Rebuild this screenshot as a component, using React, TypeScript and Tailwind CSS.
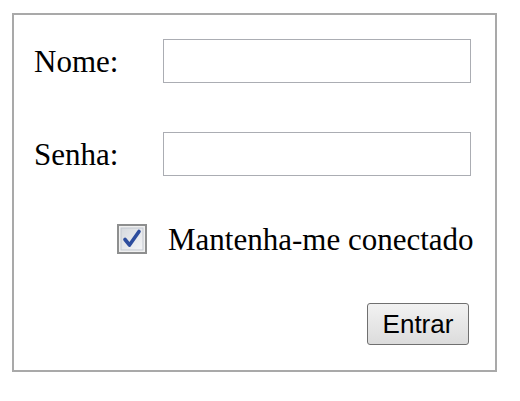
import React from 'react';

function CheckIcon() {
  return (
    <svg width="30" height="30" viewBox="0 0 30 30" className="block">
      <defs>
        <linearGradient id="cbg" x1="0" y1="0" x2="1" y2="1">
          <stop offset="0" stopColor="#d6d9de" />
          <stop offset="1" stopColor="#f4f5f7" />
        </linearGradient>
      </defs>
      <rect x="1" y="1" width="28" height="28" fill="#f0f0f0" stroke="#8e8f8f" strokeWidth="2" />
      <rect x="4" y="4" width="22" height="22" fill="url(#cbg)" stroke="#c2c7cf" strokeWidth="1" />
      <path d="M8 15.5 L12.5 21 L22 7.5" fill="none" stroke="#2d4d9e" strokeWidth="3.6" strokeLinecap="round" strokeLinejoin="round" />
    </svg>
  );
}

export default function App() {
  return (
    <div className="w-[520px] h-[401px] bg-white pt-[13px] pl-[12px]">
      <div className="w-[485px] h-[359px] border-2 border-[#a9a9a9] flex flex-col pt-[24px] text-black text-[31px] leading-none" style={{ fontFamily: '"Liberation Serif", "Times New Roman", serif' }}>
        <div className="flex items-center h-[44px]">
          <span className="w-[149px] pl-[20px]">Nome:</span>
          <input type="text" className="w-[308px] h-[44px] border border-[#abadb3] outline-none bg-white" />
        </div>
        <div className="flex items-center h-[44px] mt-[49px]">
          <span className="w-[149px] pl-[20px]">Senha:</span>
          <input type="password" className="w-[308px] h-[44px] border border-[#abadb3] outline-none bg-white" />
        </div>
        <label className="flex items-center mt-[48px] ml-[103px] gap-[21px] h-[30px]">
          <CheckIcon />
          <span className="whitespace-nowrap">Mantenha-me conectado</span>
        </label>
        <div className="flex justify-end mt-[49px] pr-[26px]">
          <button
            className="w-[102px] h-[42px] border border-[#707070] rounded-[3px] bg-gradient-to-b from-[#f2f2f2] to-[#dcdcdc] text-[26px] text-black leading-none"
            style={{ fontFamily: '"Liberation Sans", Arial, sans-serif' }}
          >
            Entrar
          </button>
        </div>
      </div>
    </div>
  );
}
